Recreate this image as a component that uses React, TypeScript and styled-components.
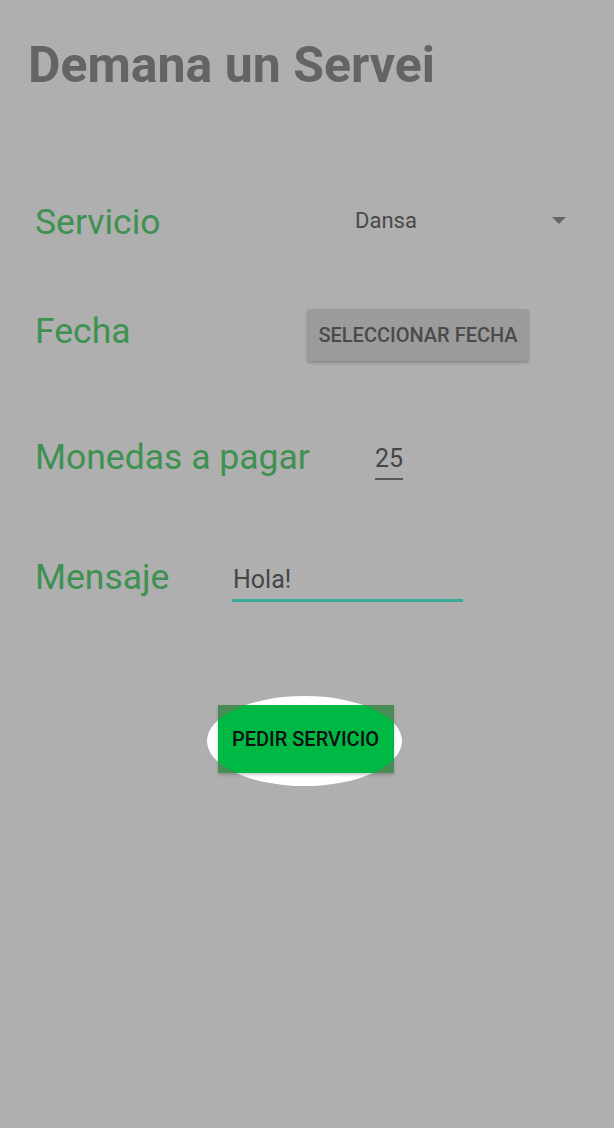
import React from "react";
import styled, { createGlobalStyle } from "styled-components";

const Global = createGlobalStyle`
  html, body {
    margin: 0;
    padding: 0;
    background: #afafaf;
  }
  body {
    font-family: Roboto, "Noto Sans", "Liberation Sans", sans-serif;
    width: 614px;
    height: 1128px;
    overflow: hidden;
  }
`;

const Screen = styled.div`
  width: 614px;
  height: 1128px;
  background: #afafaf;
  display: flex;
  flex-direction: column;
`;

const Title = styled.h1`
  margin: 40px 0 0 28px;
  font-size: 50px;
  line-height: 50px;
  font-weight: 700;
  color: #646464;
`;

const Form = styled.div`
  display: flex;
  flex-direction: column;
  padding-left: 35px;
`;

const Row = styled.div<{ $space: number }>`
  display: flex;
  align-items: center;
  height: 60px;
  margin-top: ${(p) => p.$space}px;
`;

const Label = styled.div<{ $width: number }>`
  width: ${(p) => p.$width}px;
  flex-shrink: 0;
  font-size: 35.5px;
  line-height: 40px;
  padding-top: 1px;
  color: #3e9150;
`;

const Select = styled.div`
  width: 211px;
  display: flex;
  align-items: center;
  justify-content: space-between;
  font-size: 22px;
  line-height: 24px;
  color: #4a4a4a;
`;

const Caret = styled.div`
  width: 0;
  height: 0;
  border-left: 7px solid transparent;
  border-right: 7px solid transparent;
  border-top: 7px solid #666;
  margin-top: -2px;
`;

const DateButton = styled.button`
  margin-top: 9px;
  width: 222px;
  height: 52px;
  border: none;
  border-radius: 3px;
  background: #9b9b9b;
  box-shadow: 0 2px 3px rgba(0, 0, 0, 0.22);
  font-family: Roboto, "Noto Sans", sans-serif;
  font-size: 20px;
  font-weight: 500;
  color: #4a4a4a;
  padding: 0;
`;

const Field = styled.div<{ $size: number; $line: string; $thick: number; $offset: number; $width?: number }>`
  margin-top: ${(p) => p.$offset}px;
  ${(p) => (p.$width ? `width: ${p.$width}px;` : "")}
  font-size: ${(p) => p.$size}px;
  line-height: 30px;
  color: #454545;
  padding-bottom: 4px;
  border-bottom: ${(p) => p.$thick}px solid ${(p) => p.$line};
`;

const TextField = styled(Field)`
  padding-left: 1px;
`;

const ActionArea = styled.div`
  display: flex;
  justify-content: center;
  margin-top: 90px;
  padding-right: 6px;
`;

const Spotlight = styled.div`
  position: relative;
  width: 195px;
  height: 90px;
  border-radius: 50%;
  background: #ffffff;
`;

const OrderButton = styled.button`
  position: absolute;
  left: 11px;
  top: 9px;
  width: 176px;
  height: 68px;
  border: none;
  padding: 0;
  overflow: hidden;
  background: #478c55;
  box-shadow: 0 2px 3px rgba(0, 0, 0, 0.2);
  font-family: Roboto, "Noto Sans", sans-serif;
  font-size: 20px;
  font-weight: 500;
  color: #111;
  &::before {
    content: "";
    position: absolute;
    left: -11px;
    top: -9px;
    width: 195px;
    height: 90px;
    border-radius: 50%;
    background: #00b944;
  }
`;

const ButtonText = styled.span`
  position: relative;
`;

export default function App() {
  return (
    <Screen>
      <Global />
      <Title>Demana un Servei</Title>
      <Form>
        <Row $space={101}>
          <Label $width={320}>Servicio</Label>
          <Select>
            <span>Dansa</span>
            <Caret />
          </Select>
        </Row>
        <Row $space={49}>
          <Label $width={272}>Fecha</Label>
          <DateButton>SELECCIONAR FECHA</DateButton>
        </Row>
        <Row $space={66}>
          <Label $width={340}>Monedas a pagar</Label>
          <Field $size={25} $line="#5a5a5a" $thick={2} $offset={12}>25</Field>
        </Row>
        <Row $space={60}>
          <Label $width={197}>Mensaje</Label>
          <TextField $size={25} $line="#38a897" $thick={3} $offset={14} $width={230}>Hola!</TextField>
        </Row>
      </Form>
      <ActionArea>
        <Spotlight>
          <OrderButton>
            <ButtonText>PEDIR SERVICIO</ButtonText>
          </OrderButton>
        </Spotlight>
      </ActionArea>
    </Screen>
  );
}
